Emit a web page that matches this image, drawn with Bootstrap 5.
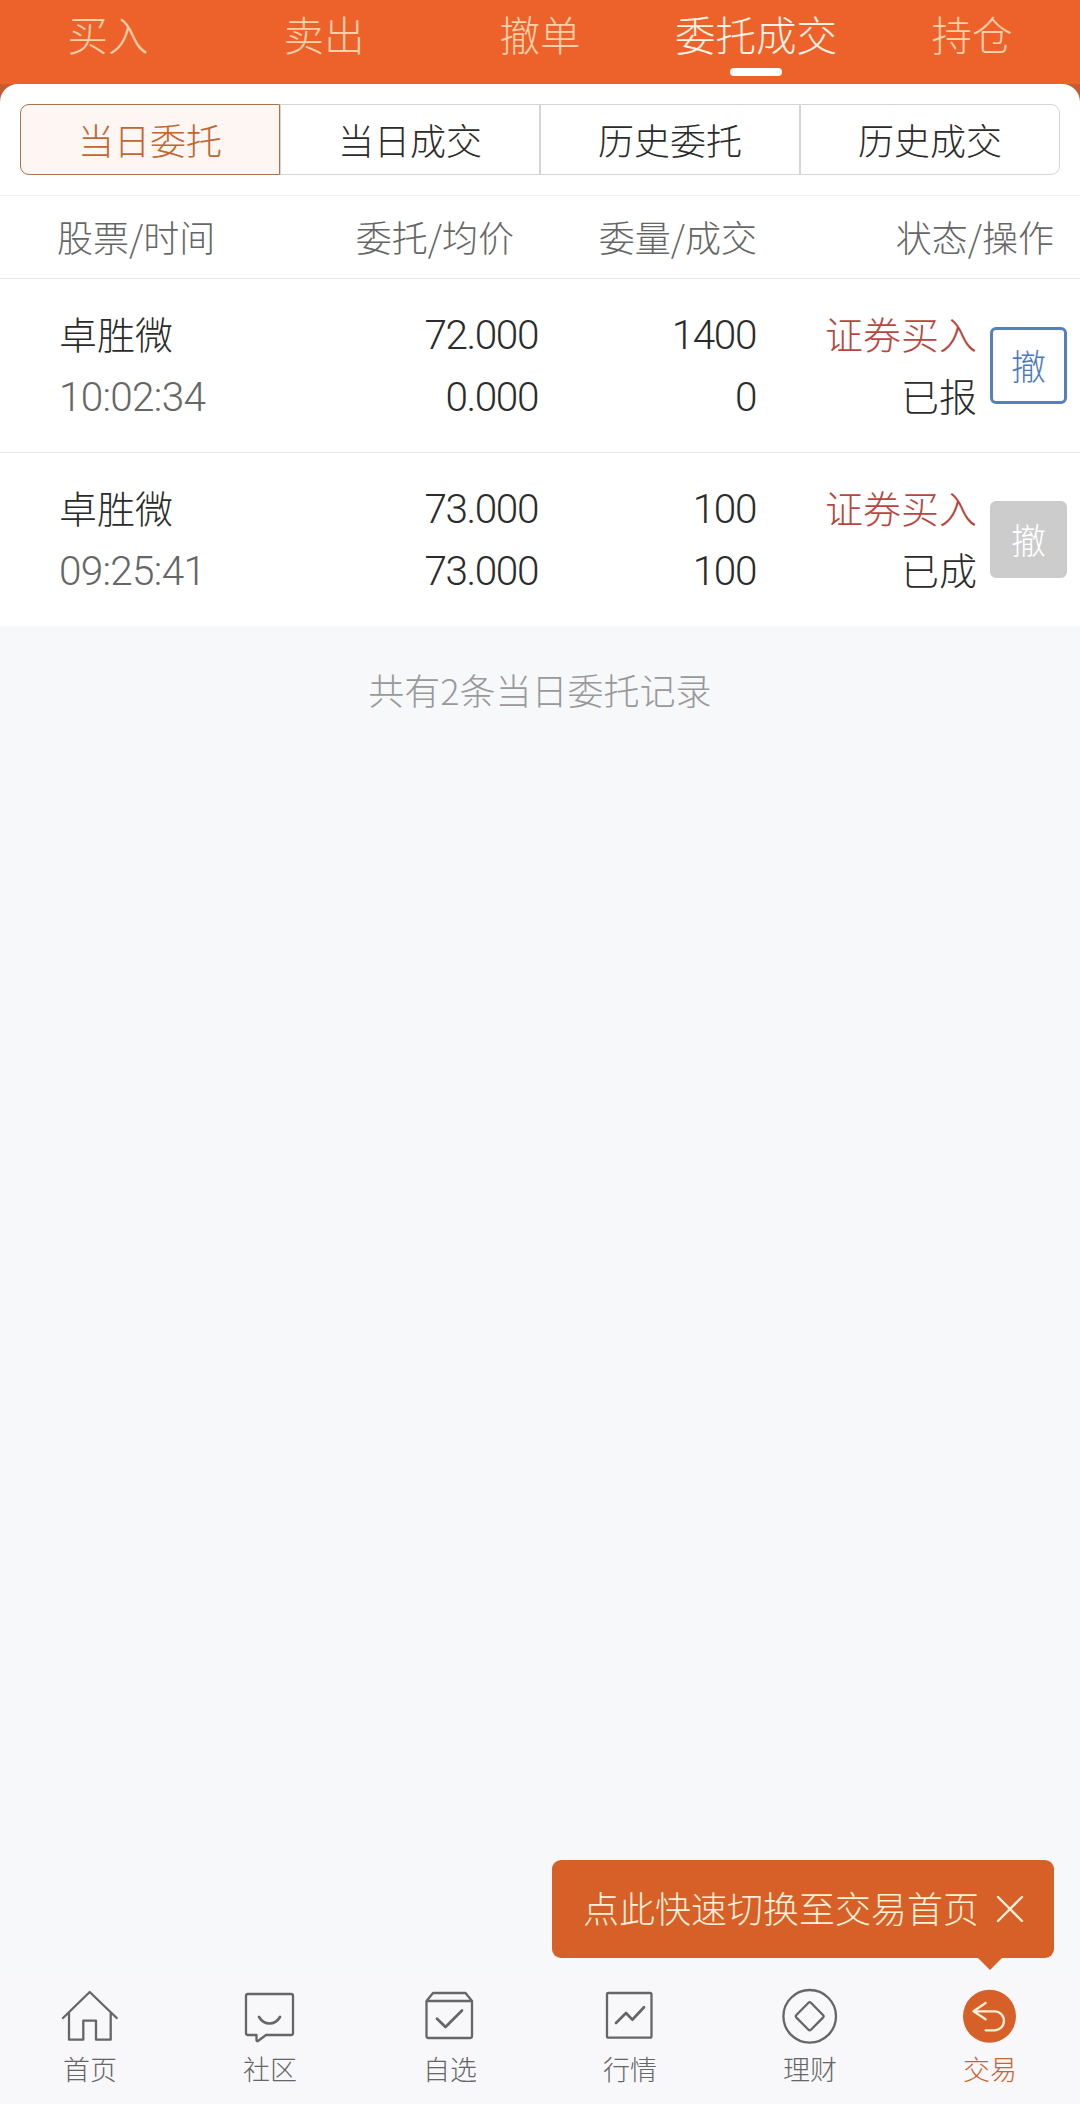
<!DOCTYPE html>
<html lang="zh-CN">
<head>
<meta charset="utf-8">
<meta name="viewport" content="width=device-width, initial-scale=1">
<title>委托成交</title>
<link href="https://cdn.jsdelivr.net/npm/bootstrap@5.3.0/dist/css/bootstrap.min.css" rel="stylesheet">
<style>
body{font-family:"Noto Sans CJK SC Light","Noto Sans CJK SC",sans-serif;font-weight:300;background:#f7f8fa;color:#2b2b2b;height:2104px;line-height:1}
.topnav{height:84px;background:#ed622b}
.topnav .nav-link{position:relative;height:84px;padding:12px 0 0;font-size:40.5px;line-height:44px;color:#ffcfa8;border-radius:0}
.topnav .nav-link.active{color:#fff4e6;font-weight:300}
.topnav .nav-link.active::after{content:"";position:absolute;left:50%;top:68px;width:52px;height:8px;margin-left:-26px;border-radius:4px;background:#fff}
.sheet-wrap{background:linear-gradient(#c75a2f 0 20px,#fff 20px)}
.sheet{background:#fff;border-radius:18px 18px 0 0;padding:20px 20px 0;height:111px}
.seg .btn{--bs-btn-font-size:36px;--bs-btn-font-weight:300;--bs-btn-line-height:1;--bs-btn-padding-x:0;--bs-btn-padding-y:0;--bs-btn-color:#2b2b2b;--bs-btn-border-color:#d4d6d6;--bs-btn-border-radius:9px;--bs-btn-active-bg:#fdf6f2;--bs-btn-active-color:#c2662f;--bs-btn-active-border-color:#a8744c;height:71px;flex:1 1 0;font-family:inherit;padding-bottom:2px}
.seg.btn-group>.btn:not(:first-child){margin-left:0}
.thead-row{height:84px;border-top:1px solid #f3f3f3;border-bottom:1px solid #e9eaea;background:#fff;font-size:36px;color:#666;padding:0 26px 2px 57px}
.thead-row .c1{width:229px}.thead-row .c2{width:228px}.thead-row .c3{width:243px}
.order{height:173px;background:#fff;padding:23px 13px 0 59px}
.order+.order{height:174px;border-top:1px solid #e9eaea}
.order .line{height:62px;line-height:61px;white-space:nowrap}
.order .c1{width:240px}.order .c2{width:239px}.order .c3{width:218px}.order .c4{width:221px}
.name,.side{font-size:38px}
.side{color:#b8463e}
.digits{font-family:Roboto,sans-serif;font-size:40.5px;letter-spacing:-1.4px}
.order .digits.line,.order .digits .line{line-height:67px}
.digits-gray{color:#666;letter-spacing:-.7px}
.btn-cancel{width:77px;height:77px;margin:25px 0 0 13px;padding:0 0 2px;border:3px solid #557fbd;border-radius:6px;color:#4c7cc0;font-size:35px;line-height:1;font-weight:300}
.btn-cancel:disabled{background:#ccc;border-color:#ccc;color:#fff;opacity:1}
.note{padding-top:45px;font-size:36px;line-height:36px;color:#999}
.bottom{height:128px;background:#f8f8fb;font-size:27px;color:#666}
.bottom .nav-link{padding:10px 0 0;color:#666;font-size:27px;line-height:28px}
.bottom .nav-link.active{color:#c9642e}
.bottom svg{display:block;width:60px;height:60px;margin:0 auto 9px;fill:none;stroke:#666;stroke-width:2.3;stroke-linejoin:round;stroke-linecap:round}
.tip{position:absolute;left:552px;top:1860px;width:502px;height:98px;border-radius:9px;background:#d75f28;color:#fff0d8;font-size:36px;padding:0 30px 5px 31px}
.tip::after{content:"";position:absolute;left:425px;top:97px;border:13px solid transparent;border-top-color:#d75f28;border-bottom:0}
.tip svg{width:28px;height:28px;stroke:#fff0d8;stroke-width:2.4;stroke-linecap:round;margin-top:5px}
</style>
</head>
<body class="d-flex flex-column position-relative overflow-hidden">
<nav class="topnav nav nav-fill flex-nowrap nav-justified">
  <a class="nav-link">买入</a><a class="nav-link">卖出</a><a class="nav-link">撤单</a><a class="nav-link active">委托成交</a><a class="nav-link">持仓</a>
</nav>
<div class="sheet-wrap"><div class="sheet">
  <div class="seg btn-group d-flex">
    <button class="btn active">当日委托</button><button class="btn">当日成交</button><button class="btn">历史委托</button><button class="btn">历史成交</button>
  </div>
</div></div>
<div class="thead-row d-flex align-items-center">
  <div class="c1">股票/时间</div><div class="c2 text-end">委托/均价</div><div class="c3 text-end">委量/成交</div><div class="flex-fill text-end">状态/操作</div>
</div>
<div class="order d-flex">
  <div class="c1"><div class="line name">卓胜微</div><div class="line digits digits-gray">10:02:34</div></div>
  <div class="c2 text-end digits"><div class="line">72.000</div><div class="line">0.000</div></div>
  <div class="c3 text-end digits"><div class="line">1400</div><div class="line">0</div></div>
  <div class="c4 text-end"><div class="line side">证券买入</div><div class="line name">已报</div></div>
  <button class="btn btn-cancel">撤</button>
</div>
<div class="order d-flex">
  <div class="c1"><div class="line name">卓胜微</div><div class="line digits digits-gray">09:25:41</div></div>
  <div class="c2 text-end digits"><div class="line">73.000</div><div class="line">73.000</div></div>
  <div class="c3 text-end digits"><div class="line">100</div><div class="line">100</div></div>
  <div class="c4 text-end"><div class="line side">证券买入</div><div class="line name">已成</div></div>
  <button class="btn btn-cancel" disabled>撤</button>
</div>
<div class="note text-center flex-grow-1">共有2条当日委托记录</div>
<div class="tip d-flex align-items-center justify-content-between">
  <span>点此快速切换至交易首页</span>
  <svg viewBox="0 0 28 28"><path d="M2 2l24 24M26 2L2 26"/></svg>
</div>
<nav class="bottom nav nav-justified flex-nowrap">
  <a class="nav-link"><svg viewBox="0 0 60 60"><path d="M3 32L29.700 6l27 26M9 27v26.700h14.300v-19H36v19h14.700V27"/></svg>首页</a>
  <a class="nav-link"><svg viewBox="0 0 60 60"><path d="M8 8h43q2 0 2 2v37q0 2-2 2H26l-8 6q-1.500 .8-1.500-1v-5H8q-2 0-2-2V10q0-2 2-2z"/><path d="M19 31q4 6.500 10.500 6.500T40 31" stroke-width="2.700"/></svg>社区</a>
  <a class="nav-link"><svg viewBox="0 0 60 60"><path d="M6.500 15L13 7h32.500L52 15v35q0 2-2 2H8.500q-2 0-2-2zM7 15h45"/><path d="M17 32.700l8.500 8.300L42 24.500" stroke-width="2.700"/></svg>自选</a>
  <a class="nav-link"><svg viewBox="0 0 60 60"><rect x="7" y="7" width="44.500" height="44.700" rx="1.500"/><path d="M16 37l10-10 6.300 6.700L44 21.300" stroke-width="2.700"/></svg>行情</a>
  <a class="nav-link"><svg viewBox="0 0 60 60"><circle cx="29.700" cy="30.300" r="26.300"/><path d="M28.500 16.800q1.200-1.200 2.400 0L43 29q1.200 1.300 0 2.600L30.900 43.800q-1.200 1.200-2.400 0L16.400 31.600q-1.200-1.300 0-2.600z"/></svg>理财</a>
  <a class="nav-link active"><svg viewBox="0 0 60 60"><circle cx="29.500" cy="30.300" r="26.500" fill="#d75f28" stroke="none"/><path d="M25.600 17L13.500 25.300l12.100 8M13.500 25.300h21a9.500 9.500 0 0 1 0 19h-8.900" stroke="#fff0d8"/></svg>交易</a>
</nav>
<script src="https://cdn.jsdelivr.net/npm/bootstrap@5.3.0/dist/js/bootstrap.bundle.min.js"></script>
</body>
</html>
